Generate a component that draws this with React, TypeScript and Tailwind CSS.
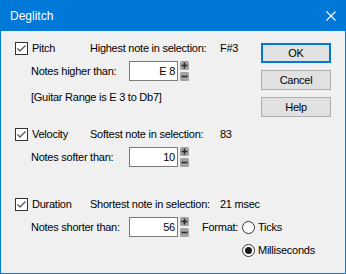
const font = { fontFamily: '"Liberation Sans", Arial, sans-serif' }

function CheckBox() {
    return (
        <div className="w-[13px] h-[13px] border border-[#333333] bg-white flex-shrink-0">
            <svg width="11" height="11" viewBox="0 0 11 11">
                <polyline points="1.5,5.5 4,8 9.5,2.5" fill="none" stroke="#444444" strokeWidth="1.1" />
            </svg>
        </div>
    )
}

function Radio({ checked }: { checked?: boolean }) {
    return (
        <div className="w-[13px] h-[13px] rounded-full border border-[#333333] bg-white flex items-center justify-center flex-shrink-0">
            {checked && <div className="w-[7px] h-[7px] rounded-full bg-[#1a1a1a]" />}
        </div>
    )
}

function Spinner() {
    return (
        <svg width="9" height="20" viewBox="0 0 9 20" className="ml-[2px] flex-shrink-0">
            <rect x="0" y="0" width="9" height="9" rx="1.5" fill="#a3a3a3" />
            <path d="M4.5 1.5 V7.5 M1.5 4.5 H7.5" stroke="#2b2b2b" strokeWidth="1.6" />
            <rect x="0" y="11" width="9" height="9" rx="1.5" fill="#a3a3a3" />
            <path d="M1.5 15.5 H7.5" stroke="#2b2b2b" strokeWidth="1.6" />
        </svg>
    )
}

function Field({ value }: { value: string }) {
    return (
        <div className="w-[49px] h-[20px] border border-[#7a7a7a] bg-white flex items-center justify-end pr-[2px] flex-shrink-0">
            <span className="whitespace-nowrap">{value}</span>
        </div>
    )
}

function HeadRow({ label, desc, value, className }: { label: string; desc: string; value: string; className: string }) {
    return (
        <div className={`flex items-center h-[13px] whitespace-nowrap ${className}`}>
            <CheckBox />
            <span className="ml-[4px] w-[58px] flex-shrink-0">{label}</span>
            <span className="w-[130px] flex-shrink-0">{desc}</span>
            <span className="flex-shrink-0">{value}</span>
        </div>
    )
}

function FieldRow({ label, value, className, children }: { label: string; value: string; className: string; children?: React.ReactNode }) {
    return (
        <div className={`flex items-center h-[20px] pl-[16px] whitespace-nowrap ${className}`}>
            <span className="w-[98px] flex-shrink-0">{label}</span>
            <Field value={value} />
            <Spinner />
            {children}
        </div>
    )
}

function Button({ label, primary }: { label: string; primary?: boolean }) {
    return (
        <div
            className={`w-[70px] h-[20px] flex items-center justify-center bg-[#e1e1e1] ${
                primary ? 'border-2 border-[#0078d7]' : 'border border-[#adadad]'
            }`}
        >
            {label}
        </div>
    )
}

export default function App() {
    return (
        <div
            className="w-[346px] h-[274px] border border-[#0078d7] bg-[#f0f0f0] flex flex-col text-[11px] leading-[13px] tracking-[-0.25px] text-black overflow-hidden"
            style={font}
        >
            <div className="h-[30px] bg-[#0078d7] flex items-center justify-between pl-[9px] pr-[9px] flex-shrink-0">
                <span className="text-white text-[12px] tracking-normal">Deglitch</span>
                <svg width="10" height="10" viewBox="0 0 10 10">
                    <path d="M0.5 0.5 L9.5 9.5 M9.5 0.5 L0.5 9.5" stroke="white" strokeWidth="1.1" />
                </svg>
            </div>
            <div className="flex flex-1">
                <div className="w-[260px] flex-shrink-0 pl-[14px] flex flex-col">
                    <HeadRow className="mt-[11px]" label="Pitch" desc="Highest note in selection:" value="F#3" />
                    <FieldRow className="mt-[6px]" label="Notes higher than:" value="E 8" />
                    <div className="pl-[16px] mt-[10px] whitespace-nowrap">[Guitar Range is E 3 to Db7]</div>
                    <HeadRow className="mt-[24px]" label="Velocity" desc="Softest note in selection:" value="83" />
                    <FieldRow className="mt-[6px]" label="Notes softer than:" value="10" />
                    <HeadRow className="mt-[31px]" label="Duration" desc="Shortest note in selection:" value="21 msec" />
                    <FieldRow className="mt-[6px]" label="Notes shorter than:" value="56">
                        <span className="ml-[13px] w-[40px] flex-shrink-0">Format:</span>
                        <Radio />
                        <span className="ml-[3px] flex-shrink-0">Ticks</span>
                    </FieldRow>
                    <div className="flex items-center h-[13px] mt-[7px] pl-[227px] whitespace-nowrap">
                        <Radio checked />
                        <span className="ml-[3px] flex-shrink-0">Milliseconds</span>
                    </div>
                </div>
                <div className="w-[70px] flex-shrink-0 pt-[12px] flex flex-col gap-[7px]">
                    <Button label="OK" primary />
                    <Button label="Cancel" />
                    <Button label="Help" />
                </div>
            </div>
        </div>
    )
}
